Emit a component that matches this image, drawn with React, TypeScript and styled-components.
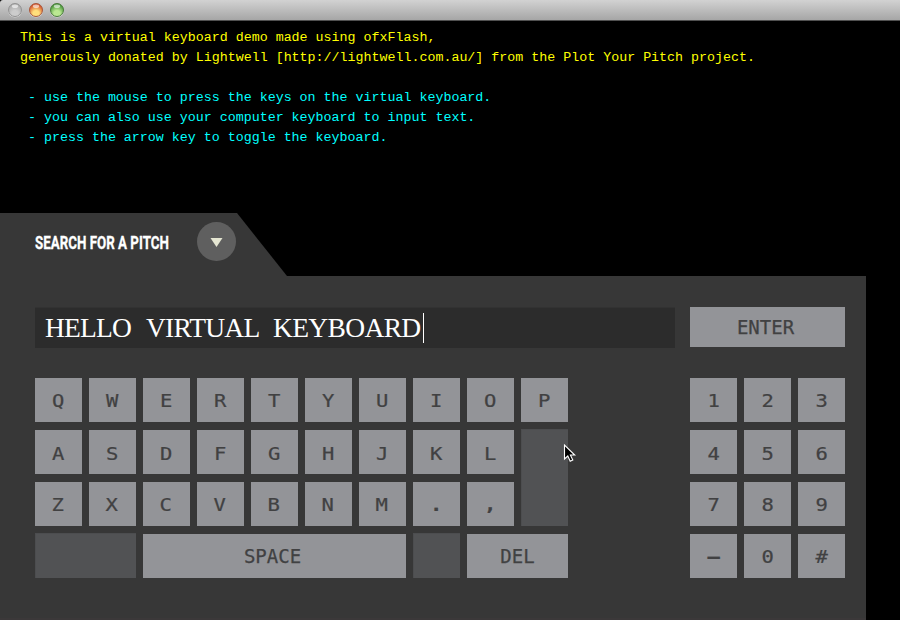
import React from 'react';
import styled, { createGlobalStyle } from 'styled-components';

const GlobalStyle = createGlobalStyle`
  * { box-sizing: border-box; }
  html, body { margin: 0; padding: 0; background: #000; overflow: hidden; }
`;

const Window = styled.main`
  position: relative;
  width: 900px;
  height: 620px;
  display: flex;
  flex-direction: column;
  background: #000;
  overflow: hidden;
`;

const TitleBar = styled.header`
  flex: none;
  height: 21px;
  padding: 2px 0 0 7px;
  display: flex;
  gap: 5px;
  background: linear-gradient(#d2d2d2, #a6a6a6);
  border-bottom: 1px solid #515151;
  border-top-left-radius: 3px;
`;

const Instructions = styled.section`
  flex: none;
  height: 192px;
  padding: 7px 20px 0;
  font: 13.32px/20px 'Liberation Mono', monospace;
`;

const Line = styled.p<{ $tone?: 'cyan' }>`
  margin: 0;
  height: 20px;
  white-space: pre;
  color: ${(p) => (p.$tone ? '#00ffff' : '#ffff00')};
`;

const Tab = styled.div`
  flex: none;
  width: 287px;
  height: 63px;
  padding-left: 35px;
  display: flex;
  background: #373737;
  clip-path: polygon(0 0, 237px 0, 287px 63px, 0 63px);
`;

const TabTitle = styled.h1`
  margin: 20px 0 0;
  width: 162px;
  font: 700 19px/20px Roboto, sans-serif;
  color: #fff;
  white-space: nowrap;
  -webkit-text-stroke: 0.3px #fff;
  transform: scaleX(0.702);
  transform-origin: 0 50%;
`;

const Toggle = styled.button`
  flex: none;
  width: 39px;
  height: 39px;
  margin: 9px 0 0;
  padding: 0;
  border: 0;
  border-radius: 50%;
  background: #5f5f5f;
  svg { display: block; }
`;

const Panel = styled.section`
  flex: none;
  width: 866px;
  height: 344px;
  padding: 31px 21px 0 35px;
  background: #373737;
  border-bottom: 2px solid #3b3839;
`;

const Columns = styled.div`
  display: flex;
  justify-content: space-between;
`;

const EntryRow = styled(Columns)`
  height: 71px;
`;

const Field = styled.div`
  width: 640px;
  height: 41px;
  padding-left: 10px;
  display: flex;
  align-items: center;
  background: #2c2c2c;
  border-top: 1px solid #323232;
  color: #fff;
  font: 27.5px/40px 'Liberation Serif', serif;
`;

const Word = styled.span<{ $width: number; $spacing: number }>`
  flex: none;
  width: ${(p) => p.$width}px;
  letter-spacing: ${(p) => p.$spacing}px;
  white-space: pre;
`;

const Caret = styled.span`
  width: 1px;
  height: 30px;
  background: #fff;
`;

const Keys = styled.div<{ $columns: number }>`
  display: grid;
  grid-template-columns: repeat(${(p) => p.$columns}, 47px);
  grid-auto-rows: 44px;
  gap: 8px 7px;
`;

const Key = styled.button<{ $span?: number }>`
  grid-column: span ${(p) => p.$span ?? 1};
  display: flex;
  align-items: center;
  justify-content: center;
  padding: 0;
  border: 0;
  background: #939498;
`;

const Legend = styled.span<{ $dx?: number; $dy?: number; $wide?: boolean; $bold?: boolean }>`
  color: #414142;
  font: ${(p) => (p.$bold ? 700 : 400)} 19px/22px 'DejaVu Sans Mono', monospace;
  -webkit-text-stroke: 0.25px #414142;
  transform: translate(${(p) => p.$dx ?? 0}px, ${(p) => p.$dy ?? 0}px)
    scale(${(p) => (p.$wide ? '1.08, 0.97' : '1, 1')});
`;

const EnterKey = styled(Key)`
  width: 155px;
  height: 40px;
`;

const BlankKey = styled.div<{ $span?: number; $rows?: number }>`
  grid-column: span ${(p) => p.$span ?? 1};
  grid-row: span ${(p) => p.$rows ?? 1};
  margin-top: -1px;
  background: #515254;
  border: 1px solid #4c4d4f;
  border-width: 1px 0 0 1px;
`;

const Pointer = styled.svg`
  position: absolute;
  left: 562px;
  top: 443px;
`;

function Light({ id, rim, dark, bright }: { id: string; rim: string; dark: string; bright: string }) {
  return (
    <svg width="16" height="16" viewBox="0 0 16 16">
      <defs>
        <radialGradient id={id} cx="50%" cy="78%" r="68%">
          <stop offset="0" stopColor={bright} />
          <stop offset=".35" stopColor={bright} />
          <stop offset="1" stopColor={dark} />
        </radialGradient>
      </defs>
      <circle cx="8" cy="8.6" r="7" fill="#d9d9d9" />
      <circle cx="8" cy="8" r="6.5" fill={`url(#${id})`} stroke={rim} />
      <ellipse cx="8" cy="4.2" rx="3.2" ry="1.8" fill="#fff" opacity=".6" />
    </svg>
  );
}

const topRow = [...'QWERTYUIOP'];
const homeRow = [...'ASDFGHJKL'];
const lowRow = [...'ZXCVBNM.,'];
const digits = [...'123456789—0#'];
const digitShift = [0, 1, 0, 0];
const heavy = '.,—';

export default function App() {
  return (
    <>
      <GlobalStyle />
      <Window>
        <TitleBar>
          <Light id="close" rim="#929292" dark="#aaaaaa" bright="#cccccc" />
          <Light id="minimise" rim="#a5573c" dark="#d4512a" bright="#ffdf7c" />
          <Light id="zoom" rim="#4a7a3c" dark="#48963a" bright="#bbe892" />
        </TitleBar>
        <Instructions>
          <Line>This is a virtual keyboard demo made using ofxFlash,</Line>
          <Line>generously donated by Lightwell [http://lightwell.com.au/] from the Plot Your Pitch project.</Line>
          <Line />
          <Line $tone="cyan"> - use the mouse to press the keys on the virtual keyboard.</Line>
          <Line $tone="cyan"> - you can also use your computer keyboard to input text.</Line>
          <Line $tone="cyan"> - press the arrow key to toggle the keyboard.</Line>
        </Instructions>
        <Tab>
          <TabTitle>SEARCH FOR A PITCH</TabTitle>
          <Toggle aria-label="Toggle keyboard">
            <svg width="39" height="39" viewBox="0 0 39 39">
              <path d="M13.5 16h12l-6 9z" fill="#e5e6d2" />
            </svg>
          </Toggle>
        </Tab>
        <Panel>
          <EntryRow>
            <Field>
              <Word $width={101} $spacing={-0.8}>HELLO  </Word>
              <Word $width={127} $spacing={-0.8}>VIRTUAL  </Word>
              <Word $width={150} $spacing={-0.65}>KEYBOARD</Word>
              <Caret />
            </Field>
            <EnterKey><Legend $dx={-2}>ENTER</Legend></EnterKey>
          </EntryRow>
          <Columns>
            <Keys $columns={10}>
              {topRow.map((k) => <Key key={k}><Legend $wide $dx={-0.5}>{k}</Legend></Key>)}
              {homeRow.map((k) => <Key key={k}><Legend $wide $dx={-0.5} $dy={1}>{k}</Legend></Key>)}
              <BlankKey $rows={2} />
              {lowRow.map((k) => (
                <Key key={k}>
                  <Legend $wide $dx={heavy.includes(k) ? -0.5 : -1} $bold={heavy.includes(k)}>{k}</Legend>
                </Key>
              ))}
              <BlankKey $span={2} />
              <Key $span={5}><Legend $dx={-2}>SPACE</Legend></Key>
              <BlankKey />
              <Key $span={2}><Legend>DEL</Legend></Key>
            </Keys>
            <Keys $columns={3}>
              {digits.map((k, i) => (
                <Key key={k}>
                  <Legend $wide $dy={digitShift[Math.floor(i / 3)]} $bold={heavy.includes(k)}>{k}</Legend>
                </Key>
              ))}
            </Keys>
          </Columns>
        </Panel>
        <Pointer width="16" height="22" viewBox="0 0 16 22">
          <path d="M2.5 2v14l3.3-3 2.4 5.2 2.6-1.2-2.4-5h4.3z" fill="#000" stroke="#fff" strokeWidth="1.1" />
        </Pointer>
      </Window>
    </>
  );
}
